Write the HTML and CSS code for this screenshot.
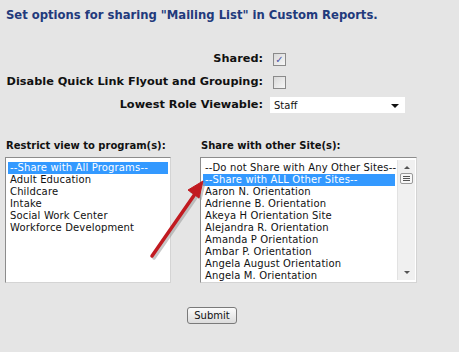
FILE: index.html
```html
<!DOCTYPE html>
<html lang="en">
<head>
  <meta charset="UTF-8" />
  <title>Sharing Options</title>
  <link rel="stylesheet" href="styles.css">
</head>
<body>
  <div class="page">
    <h1 class="title">Set options for sharing "Mailing List" in Custom Reports.</h1>

    <div class="options">
      <label class="opt-label">Shared:</label>
      <div class="opt-field"><span class="check checked">&#10003;</span></div>

      <label class="opt-label">Disable Quick Link Flyout and Grouping:</label>
      <div class="opt-field"><span class="check"></span></div>

      <label class="opt-label">Lowest Role Viewable:</label>
      <div class="opt-field">
        <div class="dropdown"><span>Staff</span><span class="caret"></span></div>
      </div>
    </div>

    <div class="lists">
      <div class="list-group">
        <div class="list-title">Restrict view to program(s):</div>
        <div class="listbox programs">
          <div class="items">
            <div class="item selected">--Share with All Programs--</div>
            <div class="item">Adult Education</div>
            <div class="item">Childcare</div>
            <div class="item">Intake</div>
            <div class="item">Social Work Center</div>
            <div class="item">Workforce Development</div>
          </div>
        </div>
      </div>

      <div class="list-group">
        <div class="list-title">Share with other Site(s):</div>
        <div class="listbox sites">
          <div class="items">
            <div class="item">--Do not Share with Any Other Sites--</div>
            <div class="item selected">--Share with ALL Other Sites--</div>
            <div class="item">Aaron N. Orientation</div>
            <div class="item">Adrienne B. Orientation</div>
            <div class="item">Akeya H Orientation Site</div>
            <div class="item">Alejandra R. Orientation</div>
            <div class="item">Amanda P Orientation</div>
            <div class="item">Ambar P. Orientation</div>
            <div class="item">Angela August Orientation</div>
            <div class="item">Angela M. Orientation</div>
          </div>
          <div class="scrollbar">
            <span class="sb-up"></span>
            <span class="sb-thumb"><span></span><span></span><span></span></span>
            <span class="sb-fill"></span>
            <span class="sb-down"></span>
          </div>
        </div>
      </div>
    </div>

    <div class="actions">
      <button type="button" class="submit">Submit</button>
    </div>

    <!-- flecha roja de la captura -->
    <svg class="arrow" width="80" height="100" viewBox="140 170 80 100">
      <g transform="translate(2,2)" fill="#9a9a9a" stroke="#9a9a9a" opacity="0.55">
        <line x1="152" y1="256" x2="195" y2="194" stroke-width="3.5" stroke-linecap="round" />
        <polygon points="203,181 199,198 188,190" />
      </g>
      <line x1="152" y1="256" x2="195" y2="194" stroke="#c11a20" stroke-width="3.5" stroke-linecap="round" />
      <polygon points="203,181 199,198 188,190" fill="#c11a20" stroke="#c11a20" stroke-linejoin="round" />
    </svg>
  </div>
</body>
</html>
```

FILE: styles.css
```css
body {
  margin: 0;
  padding: 0;
  background-color: #e5e5e5;
  font-family: 'DejaVu Sans', Verdana, sans-serif;
  color: #111;
}

.page {
  position: relative;
  width: 459px;
  height: 352px;
  padding: 8px 0 0 6px;
  box-sizing: border-box;
}

.title {
  margin: 0;
  font-size: 11.6px;
  font-weight: bold;
  color: #223a7c;
  line-height: 15px;
}

.options {
  display: grid;
  grid-template-columns: 257px auto;
  column-gap: 4px;
  row-gap: 7px;
  margin-top: 28px;
  align-items: center;
}

.opt-label {
  text-align: right;
  font-size: 11.3px;
  font-weight: bold;
  line-height: 16px;
  white-space: nowrap;
}

.opt-field {
  display: flex;
  align-items: center;
  height: 16px;
}

.check {
  width: 11px;
  height: 11px;
  margin-left: 6px;
  border: 1px solid #8a8a8a;
  background: linear-gradient(135deg, #d9d9d9, #f6f6f6);
  font-size: 10px;
  line-height: 11px;
  text-align: center;
  color: #4a55a8;
}

.dropdown {
  width: 135px;
  height: 16px;
  margin-left: 3px;
  background-color: #fff;
  display: flex;
  justify-content: space-between;
  align-items: center;
  padding: 0 4px 0 4px;
  box-sizing: border-box;
  font-size: 10px;
}

.caret {
  width: 0;
  height: 0;
  border-left: 4px solid transparent;
  border-right: 4px solid transparent;
  border-top: 4px solid #111;
  margin-right: 2px;
  margin-top: 2px;
}

.lists {
  display: flex;
  gap: 30px;
  margin-top: 27px;
}

.list-title {
  font-size: 10px;
  font-weight: bold;
  line-height: 12px;
  margin-bottom: 5px;
}

.listbox {
  display: flex;
  height: 126px;
  background-color: #fff;
  border-top: 1px solid #8c8c8c;
  border-left: 1px solid #8c8c8c;
  border-right: 1px solid #d4d4d4;
  border-bottom: 1px solid #d4d4d4;
  box-sizing: border-box;
  margin-left: -1px;
}

.programs {
  width: 166px;
}

.sites {
  width: 217px;
}

.items {
  flex: 1;
  padding: 4px 2px 0 2px;
  overflow: hidden;
}

.item {
  font-size: 10px;
  letter-spacing: 0.15px;
  line-height: 12px;
  height: 12px;
  padding-left: 2px;
  white-space: nowrap;
  color: #111;
}

.item.selected {
  background-color: #3399ff;
  color: #fff;
}

.scrollbar {
  width: 17px;
  display: flex;
  flex-direction: column;
  align-items: center;
  background-color: #f0f0f0;
  border-left: 1px solid #e2e2e2;
  margin: 2px 1px 2px 0;
}

.sb-up,
.sb-down {
  width: 0;
  height: 0;
  border-left: 3px solid transparent;
  border-right: 3px solid transparent;
  margin: 6px 0 4px;
}

.sb-up {
  border-bottom: 3px solid #555;
}

.sb-down {
  border-top: 3px solid #555;
  margin: 4px 0 6px;
}

.sb-thumb {
  width: 13px;
  height: 11px;
  border: 1px solid #9a9a9a;
  border-radius: 2px;
  background-color: #f7f7f7;
  display: flex;
  flex-direction: column;
  justify-content: center;
  align-items: center;
  gap: 1px;
  box-sizing: border-box;
}

.sb-thumb span {
  width: 7px;
  height: 1px;
  background-color: #555;
}

.sb-fill {
  flex: 1;
}

.actions {
  margin-top: 21px;
  padding-left: 181px;
}

.submit {
  font-family: 'DejaVu Sans', Verdana, sans-serif;
  font-size: 10px;
  color: #111;
  height: 17px;
  width: 50px;
  padding: 0;
  border: 1px solid #7a7a7a;
  border-radius: 3px;
  background: linear-gradient(#fbfbfb, #dcdcdc);
}

.arrow {
  position: absolute;
  left: 140px;
  top: 170px;
}
```
